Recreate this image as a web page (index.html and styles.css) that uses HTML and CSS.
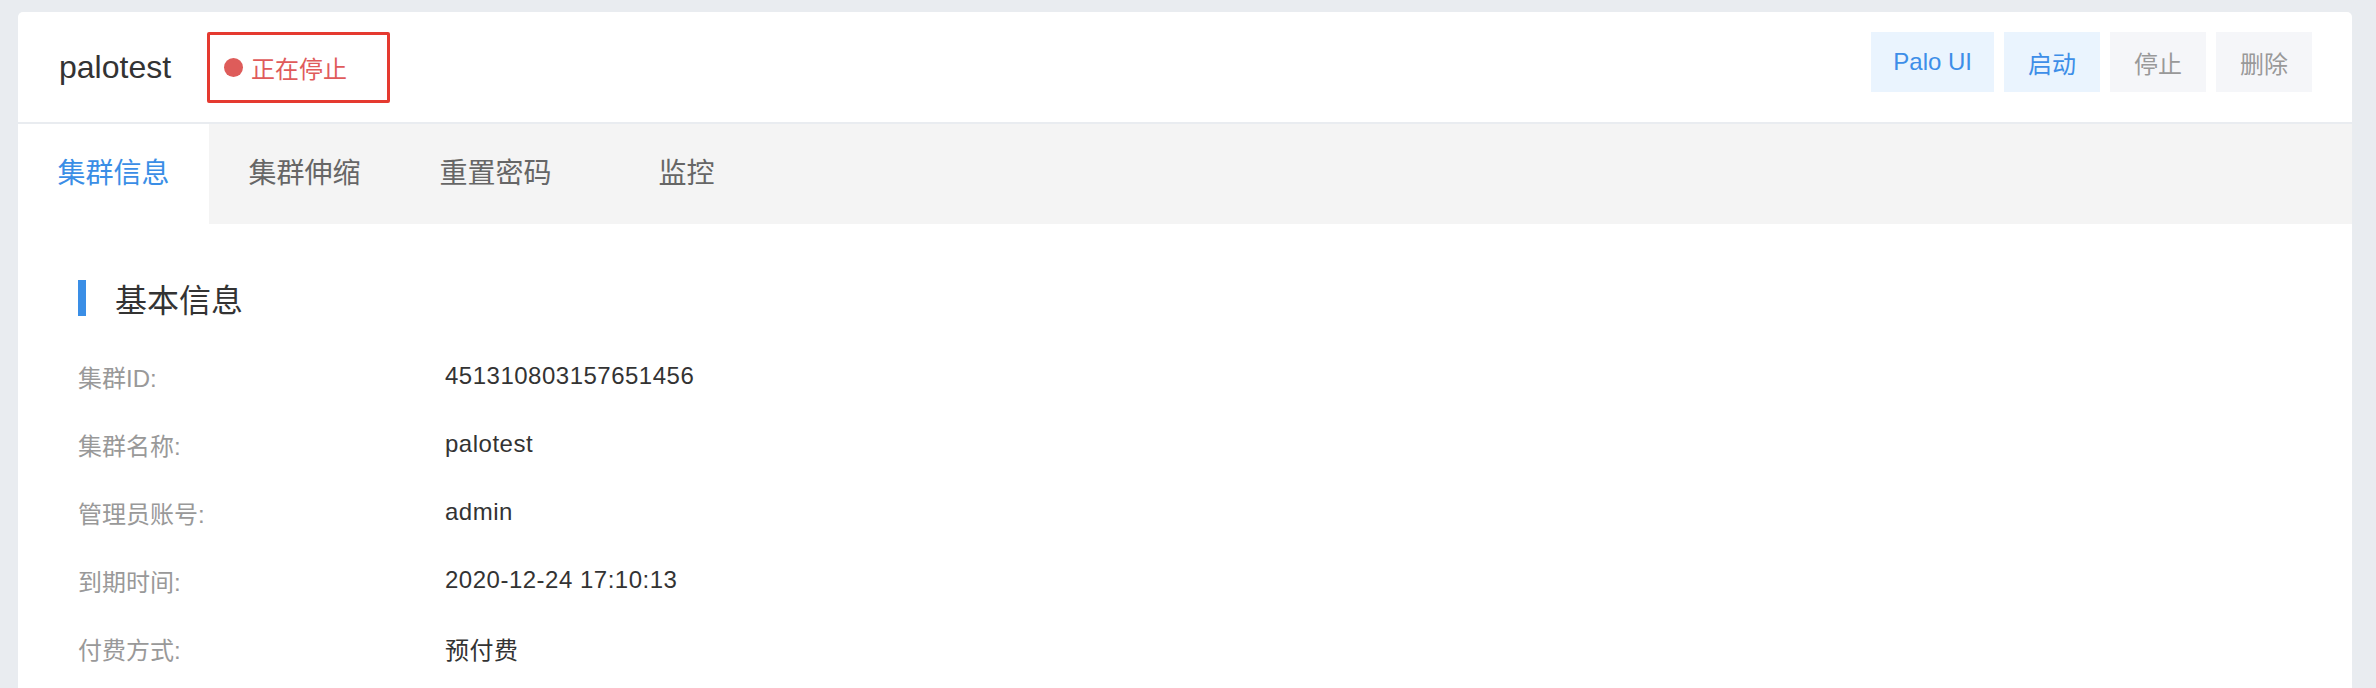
FILE: index.html
```html
<!DOCTYPE html>
<html lang="zh-CN">
<head>
  <meta charset="UTF-8" />
  <meta name="viewport" content="width=device-width, initial-scale=1.0" />
  <title>palotest - 集群详情</title>
  <link rel="stylesheet" href="styles.css">
</head>
<body>
  <div class="card">
    <header class="header">
      <h1 class="cluster-name">palotest</h1>
      <span class="status"><i class="status-dot"></i>正在停止</span>

      <div class="actions">
        <button class="btn btn-primary">Palo UI</button>
        <button class="btn btn-primary">启动</button>
        <button class="btn btn-disabled">停止</button>
        <button class="btn btn-disabled">删除</button>
      </div>
    </header>

    <nav class="tabs">
      <a class="tab active">集群信息</a>
      <a class="tab">集群伸缩</a>
      <a class="tab">重置密码</a>
      <a class="tab">监控</a>
    </nav>

    <section class="content">
      <h2 class="section-title">基本信息</h2>

      <div class="info">
        <div class="row"><span class="label">集群ID:</span><span class="value">451310803157651456</span></div>
        <div class="row"><span class="label">集群名称:</span><span class="value">palotest</span></div>
        <div class="row"><span class="label">管理员账号:</span><span class="value">admin</span></div>
        <div class="row"><span class="label">到期时间:</span><span class="value">2020-12-24 17:10:13</span></div>
        <div class="row"><span class="label">付费方式:</span><span class="value">预付费</span></div>
      </div>
    </section>
  </div>
</body>
</html>
```

FILE: styles.css
```css
* {
  box-sizing: border-box;
  margin: 0;
  padding: 0;
}

body {
  background-color: #e9ecf0;
  font-family: "Liberation Sans", "Noto Sans CJK SC", sans-serif;
  color: #333;
  padding: 12px 24px 0 18px;
}

.card {
  background-color: #fff;
  border-radius: 5px 5px 0 0;
  min-height: 720px;
  overflow: hidden;
}

.header {
  display: flex;
  align-items: center;
  height: 112px;
  padding: 0 40px 0 41px;
  border-bottom: 2px solid #e9ecf0;
}

.cluster-name {
  font-size: 32px;
  font-weight: normal;
  color: #333;
  margin-right: 36px;
}

.status {
  display: flex;
  align-items: center;
  gap: 8px;
  height: 71px;
  padding: 0 40px 0 14px;
  border: 3px solid #e53a30;
  border-radius: 2px;
  font-size: 24px;
  color: #e05b5b;
}

.status-dot {
  display: block;
  width: 19px;
  height: 19px;
  border-radius: 50%;
  background-color: #de5c5a;
}

.actions {
  display: flex;
  gap: 10px;
  align-self: flex-start;
  margin-top: 20px;
  margin-left: auto;
}

.btn {
  height: 60px;
  padding: 0 24px;
  border: none;
  font-family: inherit;
  font-size: 24px;
  cursor: pointer;
}

.btn-primary {
  background-color: #eaf4fe;
  color: #3d8ee8;
}

.btn-primary:first-child {
  padding: 0 22px;
}

.btn-disabled {
  background-color: #f5f6f9;
  color: #999;
  cursor: not-allowed;
}

.tabs {
  display: flex;
  height: 100px;
  background-color: #f4f4f4;
}

.tab {
  width: 191px;
  line-height: 100px;
  text-align: center;
  font-size: 28px;
  color: #666;
  cursor: pointer;
}

.tab.active {
  background-color: #fff;
  color: #3a8ee6;
}

.content {
  padding: 56px 60px 0;
}

.section-title {
  display: flex;
  align-items: center;
  height: 36px;
  font-size: 32px;
  font-weight: normal;
  color: #333;
}

.section-title::before {
  content: "";
  width: 8px;
  height: 36px;
  margin-right: 29px;
  background-color: #3a8ee6;
}

.info {
  margin-top: 26px;
}

.row {
  display: flex;
  align-items: center;
  height: 68px;
  font-size: 24px;
}

.label {
  width: 367px;
  color: #999;
}

.value {
  color: #333;
  letter-spacing: 0.5px;
}
```
